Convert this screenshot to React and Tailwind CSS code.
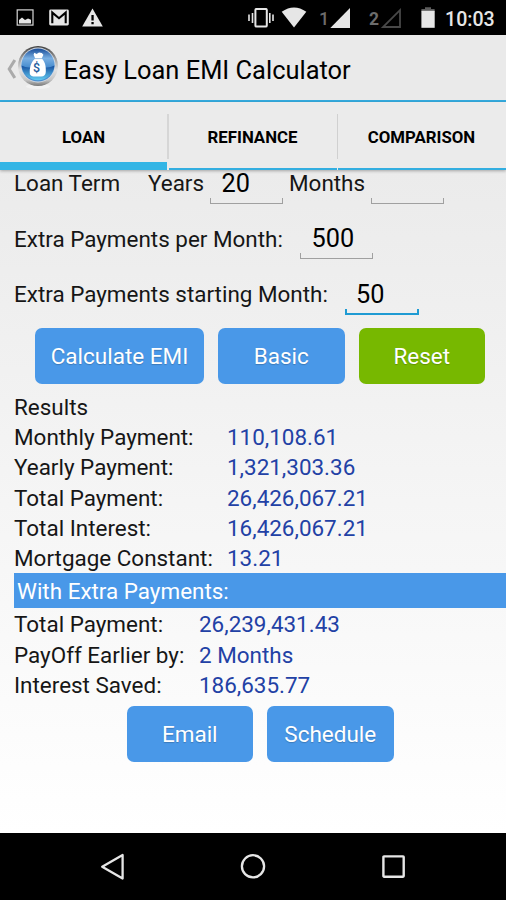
import React from "react";

function StatusBar() {
  return (
    <div className="flex h-[35px] items-start bg-black text-[#e6e6e6]">
      <svg className="ml-[16px] mt-[9px]" width="18" height="17" viewBox="0 0 18 17">
        <rect x="1.2" y="0.9" width="15.8" height="15.2" fill="none" stroke="#d8d8d8" strokeWidth="1.2" />
        <path d="M3 14.5V11L6 8.5L9 11L12 9.5L15 10.8V14.5Z" fill="#e6e6e6" />
      </svg>
      <svg className="ml-[15px] mt-[9px]" width="20" height="17" viewBox="0 0 20 17">
        <rect x="0.2" y="0.5" width="19.6" height="16" rx="1.4" fill="#e6e6e6" />
        <path d="M3.3 14.2V3.6L10 9.2L16.7 3.6V14.2" fill="none" stroke="#000" strokeWidth="2.1" />
      </svg>
      <svg className="ml-[13px] mt-[8px]" width="21" height="19" viewBox="0 0 21 19">
        <path d="M10.5 0.5L20.8 18.6H0.2Z" fill="#e6e6e6" />
        <path d="M9.4 7H11.7V12.5H9.4ZM9.4 14H11.7V16.2H9.4Z" fill="#000" />
      </svg>
      <svg className="ml-auto mt-[8px]" width="26" height="20" viewBox="0 0 26 20">
        <rect x="7.4" y="0.9" width="11.4" height="17.7" rx="1.2" fill="none" stroke="#e6e6e6" strokeWidth="2" />
        <path d="M4.5 5V15M1 6.5V13M21.8 5V15M25 6.5V13" stroke="#e6e6e6" strokeWidth="1.6" />
      </svg>
      <svg className="ml-[7px] mt-[7px]" width="26" height="21" viewBox="0 0 26 21">
        <path d="M0.7 4.8Q13 -3.8 25.3 4.8L13 20.4Z" fill="#e6e6e6" />
      </svg>
      <span className="ml-[12px] mt-[7px] w-[11px] text-[18px] leading-[23px] font-medium text-[#6c6c6c]">1</span>
      <svg className="mt-[8px]" width="21" height="20" viewBox="0 0 21 20">
        <path d="M20 0V20H0.3Z" fill="#e6e6e6" />
      </svg>
      <span className="ml-[18px] mt-[8px] w-[11px] text-[17.5px] leading-[23px] font-bold text-[#6c6c6c]">2</span>
      <svg className="mt-[8px]" width="22" height="20" viewBox="0 0 22 20">
        <path d="M20 2.2V19H3Z" fill="none" stroke="#484848" strokeWidth="1.8" />
      </svg>
      <svg className="ml-[19px] mt-[7px]" width="14" height="21" viewBox="0 0 14 21">
        <path d="M4 0.2H10V2H13.6V4.5H0.4V2H4Z" fill="#5c5c5c" />
        <rect x="0.4" y="3.8" width="13.3" height="17" fill="#e6e6e6" />
      </svg>
      <span className="ml-[10px] mt-[8px] w-[61px] text-[19.6px] leading-[23px] font-medium">10:03</span>
    </div>
  );
}

function AppIcon() {
  return (
    <svg width="42" height="48" viewBox="0 0 42 48">
      <defs>
        <linearGradient id="rim" x1="0" y1="0" x2="0" y2="1">
          <stop offset="0" stopColor="#3d3d3d" />
          <stop offset=".3" stopColor="#9a9a9a" />
          <stop offset=".6" stopColor="#e2e2e2" />
          <stop offset=".85" stopColor="#c4c4c4" />
          <stop offset="1" stopColor="#777" />
        </linearGradient>
        <linearGradient id="face" x1="0" y1="0" x2="0" y2="1">
          <stop offset="0" stopColor="#174a96" />
          <stop offset=".3" stopColor="#79afe2" />
          <stop offset=".55" stopColor="#4b8fd0" />
        </linearGradient>
        <linearGradient id="pool" x1="0" y1="0" x2="0" y2="1">
          <stop offset="0" stopColor="#164e9f" />
          <stop offset="1" stopColor="#62cdf2" />
        </linearGradient>
      </defs>
      <ellipse cx="21" cy="41.5" rx="12" ry="2.6" fill="#f2f2f2" />
      <circle cx="21" cy="21" r="20" fill="url(#rim)" />
      <circle cx="21" cy="20" r="17.4" fill="#d5dbe3" />
      <circle cx="21" cy="20" r="16.6" fill="url(#face)" />
      <path d="M4.5 20.5Q12 24.5 21 20.5Q30 24.5 37.5 20.5A16.6 16.6 0 0 1 4.5 20.5Z" fill="url(#pool)" />
      <path d="M16.6 9.8L17.3 7.8L19.6 9L22 7.6L24.8 8L26.4 9.8L24.7 13.6C28.2 17.1 29 21.1 28.8 27.1Q28.5 31.5 24.3 31.5H16.3Q12.4 31.2 12.7 26.6C13 20.6 14.6 16.8 18.2 13.6Z" fill="#fff" />
      <path d="M18 13.6H25" stroke="#9dbddd" strokeWidth="1" />
      <text x="19.6" y="27" textAnchor="middle" fontSize="12.5" fontWeight="500" fill="#245c9d">$</text>
    </svg>
  );
}

function ActionBar() {
  return (
    <div className="flex h-[67px] items-start border-b-2 border-[#35ace0] bg-[#eaeaea]">
      <svg className="ml-[6px] mt-[24px]" width="10" height="20" viewBox="0 0 10 20">
        <path d="M8.8 1L3.2 10L8.8 19" fill="none" stroke="#aaa" strokeWidth="3" />
      </svg>
      <div className="ml-[1px] mt-[10px]">
        <AppIcon />
      </div>
      <h1 className="ml-[4.5px] mt-[20px] text-[25.45px] leading-[30px] font-normal whitespace-nowrap text-black">
        Easy Loan EMI Calculator
      </h1>
    </div>
  );
}

function Tabs() {
  return (
    <div className="z-10 flex h-[68px] bg-[#ebebeb] text-[16.8px] font-bold text-black shadow-[0_1px_3px_rgba(0,0,0,0.3)]">
      <div className="flex w-[167px] items-center justify-center border-b-8 border-[#33b5e5] pt-[11px]">LOAN</div>
      <div className="mt-[12px] h-[45px] w-[2px] bg-[#d6d6d6]" />
      <div className="flex w-[168px] items-center justify-center border-b-2 border-[#33aee0] pt-[5px] pr-[1px]">REFINANCE</div>
      <div className="mt-[12px] h-[45px] w-px bg-[#d0d0d0]" />
      <div className="flex flex-1 items-center justify-center border-b-2 border-[#33aee0] pt-[5px] pr-[1px]">COMPARISON</div>
    </div>
  );
}

function Field({ className, value, focused }) {
  return (
    <div className={`flex flex-none flex-col ${className}`}>
      <span className="h-[24px] pl-[11.5px] text-[25.3px] leading-[28px] text-black">{value}</span>
      <div className={focused ? "mt-[4px] h-[6px] border-2 border-t-0 border-[#1f9bd3]" : "mt-[4px] h-[6px] border border-t-0 border-[#a0a0a0]"} />
    </div>
  );
}

function Button({ className, children }) {
  return (
    <button className={`h-[56px] rounded-[7px] pt-[2px] text-[22.5px] text-white [text-shadow:0_1px_1px_rgba(0,0,0,0.2)] ${className}`}>
      {children}
    </button>
  );
}

const results = [
  ["Monthly Payment:", "110,108.61"],
  ["Yearly Payment:", "1,321,303.36"],
  ["Total Payment:", "26,426,067.21"],
  ["Total Interest:", "16,426,067.21"],
  ["Mortgage Constant:", "13.21"],
];

const extras = [
  ["Total Payment:", "26,239,431.43"],
  ["PayOff Earlier by:", "2 Months"],
  ["Interest Saved:", "186,635.77"],
];

function Rows({ rows, labelClass }) {
  return rows.map(([label, value]) => (
    <div key={label} className="flex h-[30.2px] leading-[30.2px] whitespace-nowrap">
      <span className={labelClass}>{label}</span>
      <span className="text-[#2241a5]">{value}</span>
    </div>
  ));
}

function NavBar() {
  return (
    <div className="flex h-[67px] items-center bg-black">
      <svg className="ml-[100px]" width="26" height="28" viewBox="0 0 26 28">
        <path d="M22.6 2V25.5L2.2 13.7Z" fill="none" stroke="#e6e6e6" strokeWidth="2.3" strokeLinejoin="round" />
      </svg>
      <svg className="ml-[113px]" width="28" height="28" viewBox="0 0 28 28">
        <circle cx="14" cy="13.3" r="11.1" fill="none" stroke="#e6e6e6" strokeWidth="2.3" />
      </svg>
      <svg className="ml-[113px]" width="28" height="28" viewBox="0 0 28 28">
        <rect x="3.4" y="3.4" width="20.3" height="20.3" rx="0.6" fill="none" stroke="#e6e6e6" strokeWidth="2.4" />
      </svg>
    </div>
  );
}

export default function App() {
  return (
    <div className="flex h-[900px] w-[506px] flex-col overflow-hidden bg-black font-[Roboto,sans-serif]">
      <StatusBar />
      <ActionBar />
      <Tabs />
      <main className="flex h-[663px] flex-col bg-linear-to-b from-[#ebebeb] to-white text-[22.45px] text-[#161616]">
        <div className="flex h-[34px] flex-none items-end pl-[14px] leading-[24px] whitespace-nowrap">
          <span className="mb-[9px] w-[134px]">Loan Term</span>
          <span className="mb-[9px] w-[62px]">Years</span>
          <Field className="w-[73px]" value="20" />
          <span className="mb-[9px] ml-[6px] w-[82px]">Months</span>
          <Field className="w-[73px]" value="" />
        </div>
        <div className="flex h-[55px] flex-none items-end pl-[14px] leading-[24px] whitespace-nowrap">
          <span className="mb-[8px] w-[286px]">Extra Payments per Month:</span>
          <Field className="w-[73px]" value="500" />
        </div>
        <div className="flex h-[56px] flex-none items-end pl-[14px] leading-[24px] whitespace-nowrap">
          <span className="mb-[9px] w-[330.5px]">Extra Payments starting Month:</span>
          <Field className="w-[74px]" value="50" focused />
        </div>
        <div className="mt-[13px] flex gap-[14px] pl-[35px]">
          <Button className="w-[169px] bg-[#4998e8]">Calculate EMI</Button>
          <Button className="w-[126.5px] bg-[#4998e8]">Basic</Button>
          <Button className="w-[126.5px] bg-[#77b800]">Reset</Button>
        </div>
        <div className="mt-[8px] h-[181px] pl-[14px]">
          <div className="h-[30.2px] leading-[30.2px]">Results</div>
          <Rows rows={results} labelClass="w-[213px]" />
        </div>
        <div className="ml-[14px] h-[35px] bg-[#4998e8] pl-[3px] leading-[36px] text-white">With Extra Payments:</div>
        <div className="mt-[1.4px] h-[90.6px] pl-[14px]">
          <Rows rows={extras} labelClass="w-[185px]" />
        </div>
        <div className="mt-[6px] flex gap-[14px] pl-[126.5px]">
          <Button className="w-[126.5px] bg-[#4998e8]">Email</Button>
          <Button className="w-[126.5px] bg-[#4998e8]">Schedule</Button>
        </div>
      </main>
      <NavBar />
    </div>
  );
}
